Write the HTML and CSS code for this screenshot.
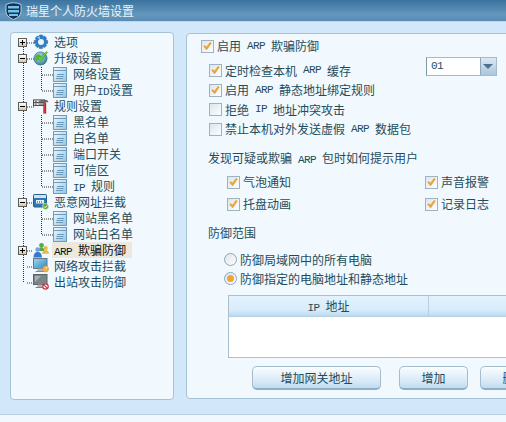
FILE: index.html
```html
<!DOCTYPE html>
<html lang="zh-CN">
<head>
	<meta charset="utf-8">
	<title>瑞星个人防火墙设置</title>
	<link rel="stylesheet" href="styles.css">
</head>
<body>
	<svg class="defs" width="0" height="0">
		<defs>
			<linearGradient id="pageFill" x1="0" y1="0" x2="1" y2="1"><stop offset="0" stop-color="#f4fbff"/><stop offset="1" stop-color="#8fc4e8"/></linearGradient>
			<linearGradient id="boxFill" x1="0" y1="0" x2="0" y2="1"><stop offset="0" stop-color="#fff"/><stop offset="1" stop-color="#c9c6b8"/></linearGradient>
			<radialGradient id="globeFill" cx=".4" cy=".35" r=".7"><stop offset="0" stop-color="#bfe6f2"/><stop offset="1" stop-color="#2d7d96"/></radialGradient>
			<linearGradient id="screenFill" x1="0" y1="0" x2="1" y2="1"><stop offset="0" stop-color="#9fd8f2"/><stop offset="1" stop-color="#2f86c0"/></linearGradient>
			<symbol id="plus" viewBox="0 0 9 9"><rect x=".5" y=".5" width="8" height="8" fill="url(#boxFill)" stroke="#5d5d55"/><path d="M2 4.500h5M4.500 2v5" stroke="#000"/></symbol>
			<symbol id="minus" viewBox="0 0 9 9"><rect x=".5" y=".5" width="8" height="8" fill="url(#boxFill)" stroke="#5d5d55"/><path d="M2 4.500h5" stroke="#000"/></symbol>
			<symbol id="page" viewBox="0 0 14 15"><rect x=".5" y=".5" width="13" height="14" fill="url(#pageFill)" stroke="#6d9cbc"/><path d="M1 3.500h12" stroke="#6d9cbc"/><path d="M4 7.500h7M3.500 9.500h7M3 11.500h7" stroke="#6d9cbc"/></symbol>
			<symbol id="gear" viewBox="0 0 16 16"><path d="M6.500 1h3l.4 2 1.700-1 2 2.200-1 1.700 2 .5v3l-2 .4 1 1.800-2.100 2-1.700-1-.4 2h-3l-.4-2-1.700 1-2-2 1-1.800-2-.4v-3l2-.5-1-1.700 2-2.200 1.700 1z" fill="#2f7fc4" stroke="#1d5a94" stroke-width=".5"/><circle cx="8" cy="8" r="3" fill="#e8f5fc"/><path d="M4 3.500l3-1v3z" fill="#8cc6ef"/></symbol>
			<symbol id="globe" viewBox="0 0 17 16"><circle cx="8" cy="8.500" r="7" fill="url(#globeFill)" stroke="#2b6f78" stroke-width=".7"/><path d="M3 5q3-2 5 0t-1 4-3 3-2-4z" fill="#5bb04a"/><path d="M5 8l3 3.500 7.500-9.500-1-1-6.500 6.500-1.500-1.500z" fill="#6ccb3c" stroke="#3c8c22" stroke-width=".5"/></symbol>
			<symbol id="tools" viewBox="0 0 17 16"><rect x=".5" y="1.500" width="12" height="3" fill="#eee" stroke="#444"/><rect x=".5" y="4.500" width="12" height="3" fill="#eee" stroke="#444"/><path d="M2 3h2M2 6h2M6 3h5M6 6h5" stroke="#555"/><path d="M8 1.500h7l1.500 2.500h-3v1h-2.500v-1.500h-3z" fill="#666"/><rect x="11" y="5" width="3" height="11" fill="#a81e1e"/><rect x="12" y="5" width="1" height="11" fill="#d85050"/></symbol>
			<symbol id="window" viewBox="0 0 16 16"><rect x=".5" y=".5" width="13" height="12.500" rx="1" fill="#2e78b4" stroke="#2b5f88"/><rect x="1" y="1" width="12" height="3" fill="#cfe4f3"/><rect x="3" y="6" width="8" height="3.500" fill="#e7f1f8"/><path d="M4 8h1M6 8h1M8 8h1" stroke="#234"/><circle cx="12.500" cy="12.500" r="3" fill="#5aa82c" stroke="#fff" stroke-width=".5"/><path d="M11 12.500l1.200 1.200 2-2.200" stroke="#fff" fill="none"/></symbol>
			<symbol id="people" viewBox="0 0 17 16"><circle cx="9" cy="3" r="2.500" fill="#5aa84c"/><path d="M5 9q1-4 4-4t3 4z" fill="#5aa84c"/><circle cx="13.500" cy="6" r="2.200" fill="#e8b84a"/><path d="M9.500 12q1-4 4-4t3.500 4z" fill="#e8b84a"/><circle cx="5" cy="7.500" r="2.500" fill="#6ea6dc"/><path d="M.5 16q0-6 4.500-6t4.500 6z" fill="#3a78c8"/></symbol>
			<symbol id="monitorOk" viewBox="0 0 16 16"><rect x=".5" y=".5" width="13.500" height="10" fill="url(#screenFill)" stroke="#64798a"/><path d="M5 10.500h4l1 2.500h-6z" fill="#aab6bf"/><path d="M2.500 13.500h9" stroke="#7d8b96"/><circle cx="12.500" cy="11" r="3" fill="#eeb04c" stroke="#c98a2a" stroke-width=".5"/><path d="M12 8l3 1-2 3z" fill="#f7d080"/></symbol>
			<symbol id="monitorOff" viewBox="0 0 16 16"><rect x=".5" y=".5" width="13.500" height="10" fill="#7c8488" stroke="#5c6468"/><path d="M2 2h6l-6 6z" fill="#a8b0b4"/><path d="M5 10.500h4l1 2.500h-6z" fill="#aab0b4"/><path d="M2.500 13.500h9" stroke="#7d8488"/><circle cx="12.500" cy="12.500" r="2.700" fill="#fff" stroke="#c8323a" stroke-width="1.200"/><path d="M10.800 10.800l3.400 3.400" stroke="#c8323a" stroke-width="1.200"/></symbol>
			<symbol id="shield" viewBox="0 0 17 18"><path d="M1 2.500q7.500-3.500 15 0v7q0 5-7.500 8-7.500-3-7.500-8z" fill="#12335a" stroke="#d6e8f4" stroke-width=".8"/><path d="M3 4h11v2.500h-11zM3 8h11v2.500h-11zM4 12h9v2h-9z" fill="#72c2ea"/></symbol>
			<symbol id="tick" viewBox="0 0 13 13"><path d="M2 6.500l3.500 4 5.500-8-1.500-1-4.200 5.600-2-1.800z" fill="#eda535" stroke="#e49a28" stroke-width=".6"/></symbol>
		</defs>
	</svg>

	<header class="titlebar">
		<svg class="title-icon"><use href="#shield"/></svg>
		<span>瑞星个人防火墙设置</span>
	</header>

	<main class="content">
		<nav class="panel tree">
			<!-- dotted tree lines lie over the rows -->
			<svg class="tree-lines" width="70" height="262">
				<path d="M12.500 14v236M16 10h7M16 26h7M16 74h7M16 170h7M16 218h6M16 234h7M16 250h7" />
				<path d="M30.500 34v24M30.500 82v72M30.500 178v24M31 42h11M31 58h11M31 90h11M31 106h11M31 122h11M31 138h11M31 154h11M31 186h11M31 202h11" />
			</svg>
			<div class="row"><svg class="box"><use href="#plus"/></svg><svg class="icon"><use href="#gear"/></svg><span class="label">选项</span></div>
			<div class="row"><svg class="box"><use href="#minus"/></svg><svg class="icon"><use href="#globe"/></svg><span class="label">升级设置</span></div>
			<div class="row sub"><svg class="page"><use href="#page"/></svg><span class="label">网络设置</span></div>
			<div class="row sub"><svg class="page"><use href="#page"/></svg><span class="label">用户<span class="lat">ID</span>设置</span></div>
			<div class="row"><svg class="box"><use href="#minus"/></svg><svg class="icon"><use href="#tools"/></svg><span class="label">规则设置</span></div>
			<div class="row sub"><svg class="page"><use href="#page"/></svg><span class="label">黑名单</span></div>
			<div class="row sub"><svg class="page"><use href="#page"/></svg><span class="label">白名单</span></div>
			<div class="row sub"><svg class="page"><use href="#page"/></svg><span class="label">端口开关</span></div>
			<div class="row sub"><svg class="page"><use href="#page"/></svg><span class="label">可信区</span></div>
			<div class="row sub"><svg class="page"><use href="#page"/></svg><span class="label"><span class="lat">IP </span>规则</span></div>
			<div class="row"><svg class="box"><use href="#minus"/></svg><svg class="icon"><use href="#window"/></svg><span class="label">恶意网址拦截</span></div>
			<div class="row sub"><svg class="page"><use href="#page"/></svg><span class="label">网站黑名单</span></div>
			<div class="row sub"><svg class="page"><use href="#page"/></svg><span class="label">网站白名单</span></div>
			<div class="row"><svg class="box"><use href="#plus"/></svg><svg class="icon"><use href="#people"/></svg><span class="label selected"><span class="lat">ARP </span>欺骗防御</span></div>
			<div class="row leaf"><svg class="icon"><use href="#monitorOk"/></svg><span class="label">网络攻击拦截</span></div>
			<div class="row leaf"><svg class="icon"><use href="#monitorOff"/></svg><span class="label">出站攻击防御</span></div>
		</nav>

		<section class="panel settings">
			<label class="opt top-opt"><span class="check"><svg><use href="#tick"/></svg></span>启用<span class="lat"> ARP </span>欺骗防御</label>

			<div class="cache-group">
				<div class="cache-opts">
					<label class="opt"><span class="check"><svg><use href="#tick"/></svg></span>定时检查本机<span class="lat"> ARP </span>缓存</label>
					<label class="opt"><span class="check"><svg><use href="#tick"/></svg></span>启用<span class="lat"> ARP </span>静态地址绑定规则</label>
					<label class="opt"><span class="check"></span>拒绝<span class="lat"> IP </span>地址冲突攻击</label>
					<label class="opt"><span class="check"></span>禁止本机对外发送虚假<span class="lat"> ARP </span>数据包</label>
				</div>
				<div class="combo"><span class="combo-value lat">01</span><span class="combo-btn"></span></div>
			</div>

			<p class="heading heading-notify">发现可疑或欺骗<span class="lat"> ARP </span>包时如何提示用户</p>
			<div class="notify-grid">
				<label class="opt"><span class="check"><svg><use href="#tick"/></svg></span>气泡通知</label>
				<label class="opt"><span class="check"><svg><use href="#tick"/></svg></span>声音报警</label>
				<label class="opt"><span class="check"><svg><use href="#tick"/></svg></span>托盘动画</label>
				<label class="opt"><span class="check"><svg><use href="#tick"/></svg></span>记录日志</label>
			</div>

			<p class="heading heading-range">防御范围</p>
			<div class="radios">
				<label class="opt"><span class="radio"></span>防御局域网中的所有电脑</label>
				<label class="opt"><span class="radio on"></span>防御指定的电脑地址和静态地址</label>
			</div>

			<div class="list">
				<div class="list-head">
					<div class="list-col first"><span class="lat">IP </span>地址</div>
					<div class="list-col"></div>
				</div>
			</div>

			<div class="actions">
				<button class="btn btn-wide">增加网关地址</button>
				<button class="btn btn-add">增加</button>
				<button class="btn btn-del">删除</button>
			</div>
		</section>
	</main>

	<footer class="bottom"></footer>
</body>
</html>
```

FILE: styles.css
```css
html, body {
	margin: 0;
	padding: 0;
}
body {
	width: 506px;
	height: 422px;
	overflow: hidden;
	position: relative;
	background: #d2e7f9;
	font-family: "Noto Sans CJK SC", sans-serif;
	font-size: 12px;
	line-height: 16px;
	color: #1f4c5a;
}
.defs {
	position: absolute;
}
.lat {
	font-family: "Liberation Mono", monospace;
	font-size: 11px;
	line-height: 1;
	letter-spacing: -0.6px;
	white-space: pre;
}

/* title */
.titlebar {
	height: 21px;
	display: flex;
	align-items: center;
	gap: 4px;
	padding-left: 5px;
	color: #eaf4fb;
	background: linear-gradient(#3a739f, #6597bd 70%, #5a8cb3);
	border-bottom: 1px solid #b9d6ea;
}
.title-icon {
	width: 17px;
	height: 18px;
}

/* main area */
.content {
	display: flex;
	gap: 12px;
	padding: 10px 0 0 10px;
}
.panel {
	position: relative;
	flex-shrink: 0;
	background: #f1f9ff;
	border: 1px solid #a5c2d6;
	border-radius: 4px;
	box-sizing: border-box;
}
.tree {
	width: 164px;
	height: 368px;
	padding-top: 1px;
}
.settings {
	width: 350px;
	height: 366px;
	margin-top: 1px;
}

/* tree */
.tree-lines {
	position: absolute;
	left: 0;
	top: 0;
}
.tree-lines path {
	fill: none;
	stroke: #333;
	stroke-dasharray: 1 1;
}
.row {
	position: relative;
	height: 16px;
	display: flex;
	align-items: center;
	padding-left: 7px;
	white-space: nowrap;
}
.row.sub {
	padding-left: 42px;
}
.row.leaf {
	padding-left: 22px;
}
.box {
	width: 9px;
	height: 9px;
	margin-right: 6px;
}
.icon {
	width: 16px;
	height: 16px;
	margin-right: 5px;
}
.page {
	width: 14px;
	height: 15px;
	margin-right: 6px;
}
.label.selected {
	background: #ece8dc;
	color: #111;
	padding-right: 6px;
	margin-left: -2px;
	padding-left: 2px;
}

/* options */
.opt {
	display: flex;
	align-items: center;
	height: 20px;
	white-space: nowrap;
}
.check {
	width: 13px;
	height: 13px;
	box-sizing: border-box;
	border: 1px solid #9eb2c0;
	background: linear-gradient(135deg, #dbe6ee, #fdfeff);
	margin-right: 3px;
	flex-shrink: 0;
}
.check svg {
	display: block;
	width: 11px;
	height: 11px;
}
.top-opt {
	margin: 2px 0 0 14px;
}
.cache-group {
	display: flex;
	margin: 5px 0 0 22px;
}
.cache-opts {
	width: 217px;
}
.cache-opts .opt {
	height: 19.5px;
}
.combo {
	display: flex;
	width: 71px;
	height: 19px;
	margin-top: -4px;
	box-sizing: border-box;
	border: 1px solid #a3bccd;
	border-left-color: #7e98a8;
	background: #fff;
}
.combo-value {
	flex: 1;
	padding-left: 4px;
	line-height: 17px;
}
.combo-btn {
	position: relative;
	width: 15px;
	background: linear-gradient(#dbe8f3, #aac6dc);
	border-left: 1px solid #8ba9bf;
}
.combo-btn::after {
	content: "";
	position: absolute;
	left: 2px;
	top: 6px;
	border-left: 5px solid transparent;
	border-right: 5px solid transparent;
	border-top: 5px solid #4f7290;
}
.heading {
	margin: 0 0 0 21px;
	white-space: nowrap;
}
.heading-notify {
	margin-top: 11px;
}
.notify-grid {
	display: grid;
	grid-template-columns: 198px auto;
	grid-auto-rows: 22px;
	margin: 5px 0 0 40px;
}
.notify-grid .opt {
	height: 22px;
}
.heading-range {
	margin-top: 10px;
}
.radios {
	margin: 9px 0 0 37px;
}
.radios .opt {
	height: 19px;
}
.radio {
	position: relative;
	width: 13px;
	height: 13px;
	box-sizing: border-box;
	border: 1px solid #8ea6b7;
	border-radius: 50%;
	background: linear-gradient(135deg, #d9e4ec, #fff);
	margin-right: 3px;
}
.radio.on::after {
	content: "";
	position: absolute;
	left: 2px;
	top: 2px;
	width: 7px;
	height: 7px;
	border-radius: 50%;
	background: #eda535;
}

/* list */
.list {
	margin: 7px 0 0 41px;
	height: 63px;
	background: #fff;
	border: 1px solid #a9c0cf;
	box-sizing: border-box;
}
.list-head {
	display: flex;
	height: 20px;
	background: linear-gradient(#e3f2fd, #d8ecfb 70%, #bcdaf0);
	border-bottom: 1px solid #b6cfe1;
}
.list-col {
	flex: 1;
	text-align: center;
	line-height: 19px;
}
.list-col.first {
	flex: 0 0 199px;
	border-right: 1px solid #b6cfe1;
}

/* buttons */
.actions {
	display: flex;
	margin: 8px 0 0 65px;
}
.btn {
	height: 24px;
	padding: 0;
	flex-shrink: 0;
	font: inherit;
	color: inherit;
	background: linear-gradient(#fafdff, #d6e8f6 70%, #c2dbee);
	border: 1px solid #a4bccc;
	border-bottom: 2px solid #8db0c9;
	border-radius: 5px;
}
.btn-wide {
	width: 129px;
	margin-right: 18px;
}
.btn-add {
	width: 69px;
	margin-right: 12px;
}
.btn-del {
	width: 69px;
}

.bottom {
	margin-top: 14px;
	height: 8px;
	background: #f1f9fe;
	border-top: 1px solid #b5cfdf;
}
```
